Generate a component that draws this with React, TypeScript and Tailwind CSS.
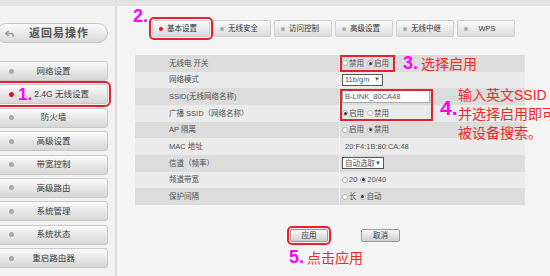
import { Reply } from "lucide-react"

const cjk = { fontFamily: '"Liberation Sans", "Noto Sans CJK SC", sans-serif' }

const menu = ["网络设置", "2.4G 无线设置", "防火墙", "高级设置", "带宽控制", "高级路由", "系统管理", "系统状态", "重启路由器"]
const tabs = ["基本设置", "无线安全", "访问控制", "高级设置", "无线中继", "WPS"]

const Radio = ({ on, label }: { on: boolean; label: string }) => (
  <span className="flex items-center mr-[3px]">
    <span className="w-[6px] h-[6px] rounded-full border border-[#b5b5b5] bg-white flex items-center justify-center mr-[1px]">
      {on && <span className="w-[3px] h-[3px] rounded-full bg-[#333]" />}
    </span>
    {label}
  </span>
)

const Select = ({ text, w }: { text: string; w: string }) => (
  <span className={`${w} h-[12px] border border-[#555] bg-white flex items-center justify-between px-[2px] text-[7.5px]`}>
    <span>{text}</span>
    <span className="text-[6px]">▼</span>
  </span>
)

const rows: { label: string; value: React.ReactNode }[] = [
  { label: "无线电 开关", value: <><Radio on={false} label="禁用" /><Radio on label="启用" /></> },
  { label: "网络模式", value: <Select text="11b/g/n" w="w-[41px]" /> },
  {
    label: "SSID(无线网络名称)",
    value: (
      <span className="w-[88px] h-[13px] border border-[#aaa] bg-white flex items-center px-[2px] text-[7.5px]">B-LINK_80CA48</span>
    ),
  },
  { label: "广播 SSID（网络名称）", value: <><Radio on label="启用" /><Radio on={false} label="禁用" /></> },
  { label: "AP 隔离", value: <><Radio on={false} label="启用" /><Radio on label="禁用" /></> },
  { label: "MAC 地址", value: <span className="pl-[3px]">20:F4:1B:80:CA:48</span> },
  { label: "信道（频率）", value: <Select text="自动选取" w="w-[42px]" /> },
  { label: "频道带宽", value: <><Radio on={false} label="20" /><Radio on label="20/40" /></> },
  { label: "保护间隔", value: <><Radio on={false} label="长" /><Radio on label="自动" /></> },
]

export default function App() {
  return (
    <div className="w-[550px] h-[276px] bg-[#f4f4f4] flex flex-col overflow-hidden text-[#505050]" style={cjk}>
      <div className="h-[6px] bg-[#e3e3e3] shrink-0" />
      <div className="flex flex-1">
        {/* sidebar */}
        <aside className="w-[117px] shrink-0 bg-[#f2f2f2] border-r-2 border-[#dcdcdc] pt-[17px] flex flex-col">
          <div className="-ml-[4px] w-[112px] h-[20px] rounded-[10px] border border-[#c4c4c4] bg-gradient-to-b from-[#fbfbfb] to-[#d9d9d9] flex items-center">
            <Reply size={11} className="ml-[7px] text-[#9a9a9a]" strokeWidth={3} />
            <span className="ml-[14px] text-[11px] font-bold text-[#555] tracking-[1px]">返回易操作</span>
          </div>
          <div className="mt-[18px] flex flex-col gap-[3.4px]">
            {menu.map((m, i) => (
              <div
                key={m}
                className={`relative -ml-[4px] w-[112px] h-[20px] rounded-[3px] border border-[#c8c8c8] bg-gradient-to-b from-[#fafafa] to-[#d6d6d6] flex items-center text-[8.5px] text-[#3a3a3a] ${
                  i === 1 ? "outline-2 outline-[#e8202a] outline-offset-[1px]" : ""
                }`}
              >
                <span className={`ml-[12px] w-[5px] h-[5px] rounded-full ${i === 1 ? "bg-[#e8101a]" : "bg-[#a8a8a8]"}`} />
                {i === 1 ? (
                  <>
                    <span className="ml-[4px] text-[17px] font-bold text-[#ff00ff] leading-none">1.</span>
                    <span className="ml-[2px]">{m}</span>
                  </>
                ) : (
                  <span className="flex-1 text-center pr-[14px]">{m}</span>
                )}
              </div>
            ))}
          </div>
        </aside>

        {/* main */}
        <main className="relative flex-1 pt-[14px] text-[7.5px]">
          <span className="absolute left-[16px] -top-[3px] text-[18px] font-bold text-[#ff00ff]">2.</span>

          <div className="ml-[35px] flex gap-[3px]">
            {tabs.map((t, i) => (
              <div
                key={t}
                className={`w-[58px] h-[17px] rounded-[2px] border border-[#cfcfcf] bg-gradient-to-b from-[#fcfcfc] to-[#dadada] flex items-center text-[#333] ${
                  i === 0 ? "outline-2 outline-[#e8202a] outline-offset-[1px]" : ""
                }`}
              >
                <span className={`ml-[6px] w-[4px] h-[4px] rounded-full ${i === 0 ? "bg-[#e8101a]" : "bg-[#aaa]"}`} />
                <span className="flex-1 text-center pr-[8px]">{t}</span>
              </div>
            ))}
          </div>

          <div className="ml-[18px] mt-[18px] w-[390px] flex flex-col">
            {rows.map((r, i) => (
              <div key={r.label} className={`h-[16.67px] flex ${i % 2 === 0 ? "bg-[#dcdcdc]" : "bg-[#ebebeb]"}`}>
                <div className="w-[205px] shrink-0 pl-[34px] flex items-center border-r border-[#f4f4f4]">{r.label}</div>
                <div className="flex-1 flex items-center pl-[2px]">{r.value}</div>
              </div>
            ))}
          </div>

          <div className="ml-[173px] mt-[24px] flex gap-[33px]">
            <button className="w-[38px] h-[13px] border border-[#999] rounded-[2px] bg-gradient-to-b from-[#f8f8f8] to-[#cfcfcf] text-[7.5px] text-[#333] outline-2 outline-[#e8202a] outline-offset-[1px]">
              应用
            </button>
            <button className="w-[39px] h-[13px] border border-[#999] rounded-[2px] bg-gradient-to-b from-[#f8f8f8] to-[#cfcfcf] text-[7.5px] text-[#333]">
              取消
            </button>
          </div>

          {/* annotations */}
          <div className="absolute left-[223px] top-[49px] w-[55px] h-[17px] border-2 border-[#e8202a]" />
          <div className="absolute left-[286px] top-[44px] flex items-baseline">
            <span className="text-[18px] font-bold text-[#ff00ff]">3.</span>
            <span className="ml-[3px] text-[14px] text-[#f02828]">选择启用</span>
          </div>

          <div className="absolute left-[223px] top-[83px] w-[93px] h-[32px] border-2 border-[#e8202a]" />
          <span className="absolute left-[323px] top-[86px] text-[21px] font-bold text-[#ff00ff]">4.</span>
          <div className="absolute left-[341px] top-[80px] text-[14px] leading-[19px] text-[#f02828] whitespace-nowrap">
            <div>输入英文SSID</div>
            <div>并选择启用即可</div>
            <div>被设备搜索。</div>
          </div>

          <div className="absolute left-[172px] top-[238px] flex items-baseline">
            <span className="text-[18px] font-bold text-[#ff00ff]">5.</span>
            <span className="ml-[3px] text-[14px] text-[#f02828]">点击应用</span>
          </div>
        </main>
      </div>
    </div>
  )
}
